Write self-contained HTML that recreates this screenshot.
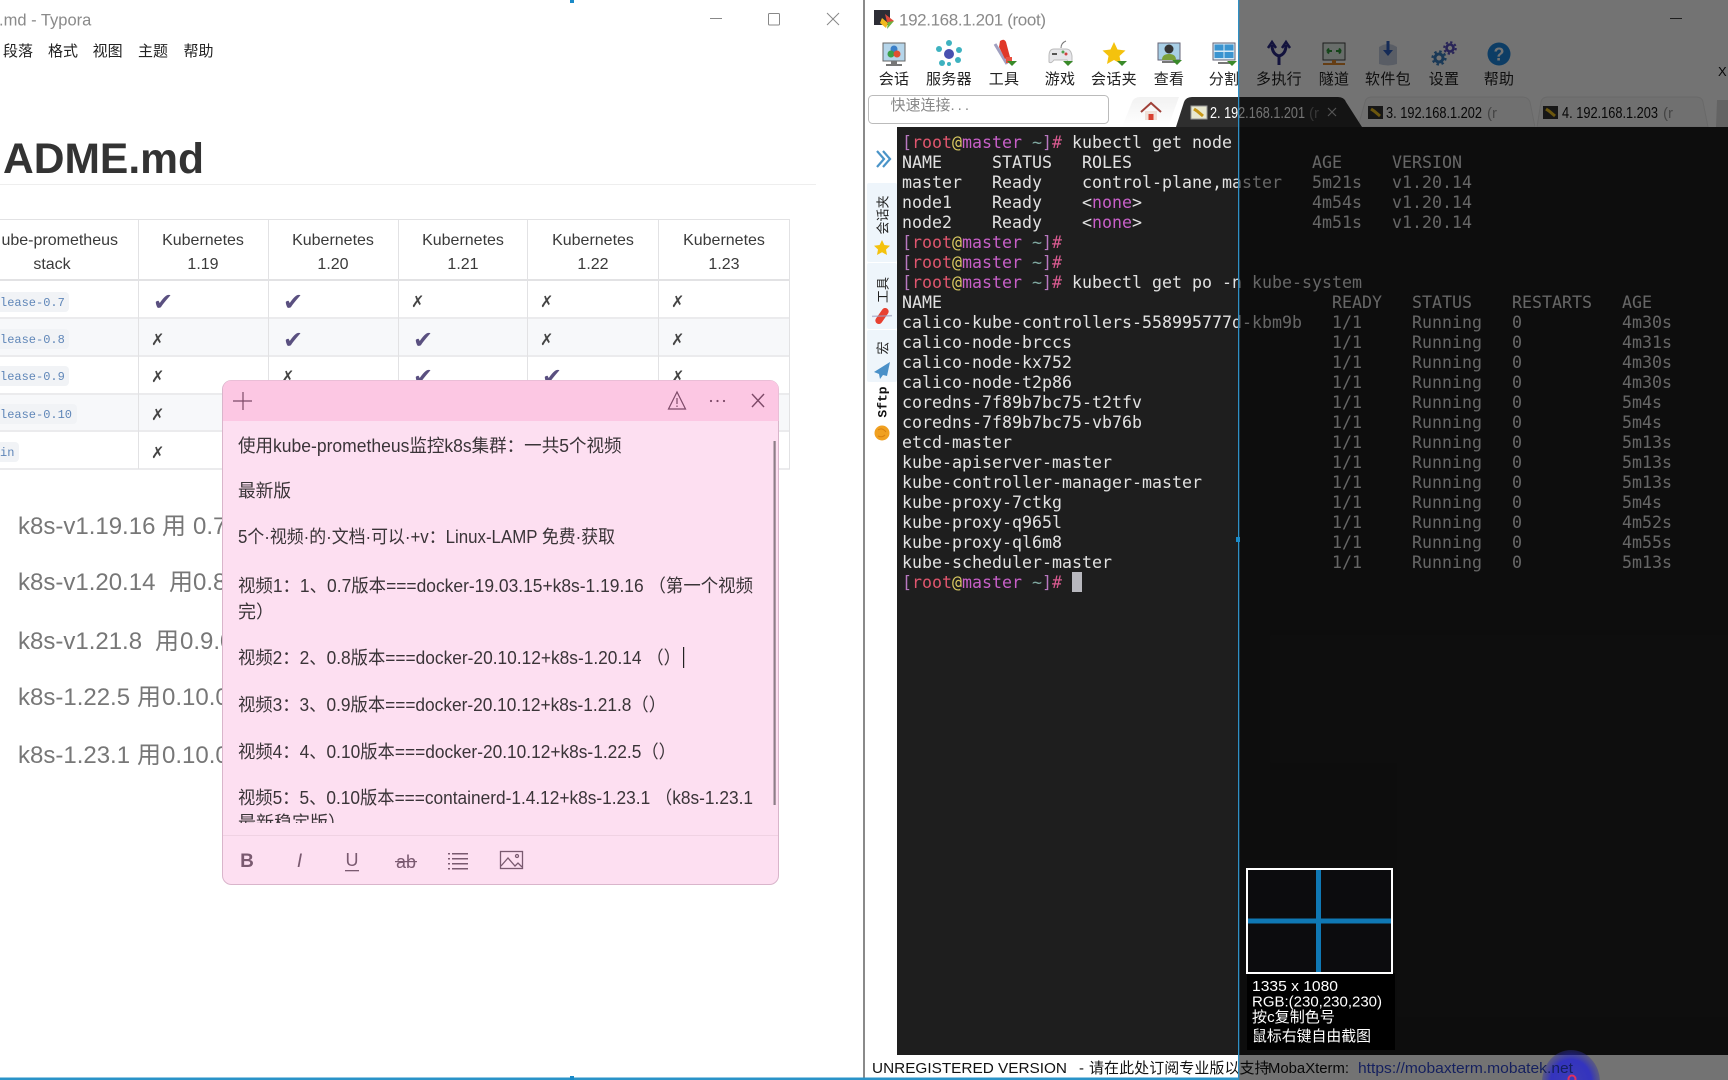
<!DOCTYPE html>
<html><head><meta charset="utf-8"><title>Typora MobaXterm</title>
<style>
html,body{margin:0;padding:0;background:#fff;width:1728px;height:1080px;overflow:hidden}
svg{display:block}
text{font-family:"Liberation Sans","Noto Sans CJK SC",sans-serif;white-space:pre}
.m{font-family:"DejaVu Sans Mono","Liberation Mono","Noto Sans CJK SC",monospace;font-size:16.61px;fill:#e2e2e2}
.c{font-family:"Liberation Mono",monospace;font-size:12px;fill:#5f86b8}
.h{font-size:16px;fill:#3a3a3a;text-anchor:middle}
.x{font-family:"DejaVu Sans",sans-serif;font-size:16px;fill:#444}
.k{font-family:"DejaVu Sans",sans-serif;font-size:24px;fill:#5a5080}
.p{font-size:24px;fill:#777}
.n{font-size:18px;fill:#3a3438}
.tb{font-size:15px;fill:#222;text-anchor:middle;letter-spacing:.3px}
.pk{fill:#c860c8}.r{fill:#e0566e}.y{fill:#d8c860}.g{fill:#7fa8a0}.br{fill:#b878c0}.hs{fill:#d85a90}
</style></head><body>
<svg width="1728" height="1080" viewBox="0 0 1728 1080" xmlns="http://www.w3.org/2000/svg">
<defs>
<clipPath id="noteclip"><rect x="223" y="421" width="548" height="402"/></clipPath>
<linearGradient id="hometab" x1="0" y1="0" x2="0" y2="1"><stop offset="0" stop-color="#f2f2f2"/><stop offset="1" stop-color="#fff"/></linearGradient>
<radialGradient id="blob" cx=".5" cy=".5" r=".5"><stop offset="0" stop-color="#2a2acc"/><stop offset=".7" stop-color="#1e1ed8"/><stop offset="1" stop-color="#3030a0" stop-opacity=".5"/></radialGradient>
</defs>
<rect width="1728" height="1080" fill="#fff"/>

<!-- TYPORA -->
<text x="-1" y="25.500" font-size="16.5" fill="#8a8a8a">.md - Typora</text>
<g font-size="15" fill="#222"><text x="3" y="56">段落</text><text x="48" y="56">格式</text><text x="92.6" y="56">视图</text><text x="138" y="56">主题</text><text x="183.5" y="56">帮助</text></g>
<g stroke="#888" stroke-width="1" fill="none"><path d="M710 18.5h12"/><rect x="768.5" y="13.5" width="11" height="11.5" rx="1"/><path d="M827 13l12 12M839 13l-12 12"/></g>
<text x="3" y="173" font-size="42.6" font-weight="700" fill="#333" textLength="201" lengthAdjust="spacingAndGlyphs">ADME.md</text>
<rect x="0" y="184" width="816" height="1" fill="#eee"/>

<!-- table -->
<rect x="0" y="318" width="790" height="38" fill="#f7f8fa"/><rect x="0" y="394" width="790" height="37" fill="#f7f8fa"/>
<g fill="#e2e2e4"><rect x="0" y="219" width="790" height="1"/><rect x="0" y="279" width="790" height="2"/><rect x="0" y="317" width="790" height="2" fill="#ebebed"/><rect x="0" y="355" width="790" height="2" fill="#ebebed"/><rect x="0" y="393" width="790" height="2" fill="#ebebed"/><rect x="0" y="430" width="790" height="2" fill="#ebebed"/><rect x="0" y="468" width="790" height="2" fill="#ebebed"/>
<rect x="138" y="219" width="1" height="250"/><rect x="268" y="219" width="1" height="250"/><rect x="398" y="219" width="1" height="250"/><rect x="527" y="219" width="1" height="250"/><rect x="658" y="219" width="1" height="250"/><rect x="789" y="219" width="1" height="250"/></g>
<text x="118" y="245" font-size="16" fill="#3a3a3a" text-anchor="end">ube-prometheus</text>
<text x="52" y="269" class="h">stack</text>
<text x="203" y="245" class="h">Kubernetes</text><text x="203" y="269" class="h">1.19</text>
<text x="333" y="245" class="h">Kubernetes</text><text x="333" y="269" class="h">1.20</text>
<text x="463" y="245" class="h">Kubernetes</text><text x="463" y="269" class="h">1.21</text>
<text x="593" y="245" class="h">Kubernetes</text><text x="593" y="269" class="h">1.22</text>
<text x="724" y="245" class="h">Kubernetes</text><text x="724" y="269" class="h">1.23</text>
<g fill="#f1f3f6"><rect x="-6" y="292" width="75" height="20" rx="4"/><rect x="-6" y="329" width="75" height="20" rx="4"/><rect x="-6" y="366" width="75" height="20" rx="4"/><rect x="-6" y="404" width="83" height="20" rx="4"/><rect x="-6" y="442" width="25" height="20" rx="4"/></g>
<text x="0" y="306" class="c">lease-0.7</text><text x="0" y="343" class="c">lease-0.8</text><text x="0" y="380" class="c">lease-0.9</text><text x="0" y="418" class="c">lease-0.10</text><text x="0" y="456" class="c">in</text>
<text x="153" y="310" class="k">&#x2714;</text><text x="283" y="310" class="k">&#x2714;</text><text x="411" y="307" class="x">&#x2717;</text><text x="540" y="307" class="x">&#x2717;</text><text x="671" y="307" class="x">&#x2717;</text>
<text x="151" y="345" class="x">&#x2717;</text><text x="283" y="348" class="k">&#x2714;</text><text x="413" y="348" class="k">&#x2714;</text><text x="540" y="345" class="x">&#x2717;</text><text x="671" y="345" class="x">&#x2717;</text>
<text x="151" y="382" class="x">&#x2717;</text><text x="281" y="382" class="x">&#x2717;</text><text x="413" y="385" class="k">&#x2714;</text><text x="542" y="385" class="k">&#x2714;</text><text x="671" y="382" class="x">&#x2717;</text>
<text x="151" y="420" class="x">&#x2717;</text>
<text x="151" y="458" class="x">&#x2717;</text>

<!-- paragraphs -->
<text y="534" class="p"><tspan x="18">k8s-v1.19.16</tspan><tspan x="162">用</tspan><tspan x="193">0.7.0</tspan></text>
<text y="590" class="p"><tspan x="18">k8s-v1.20.14</tspan><tspan x="169">用</tspan><tspan x="193">0.8.0</tspan></text>
<text y="649" class="p"><tspan x="18">k8s-v1.21.8</tspan><tspan x="155">用</tspan><tspan x="180">0.9.0</tspan></text>
<text y="705" class="p"><tspan x="18">k8s-1.22.5</tspan><tspan x="137">用</tspan><tspan x="162">0.10.0</tspan></text>
<text y="763" class="p"><tspan x="18">k8s-1.23.1</tspan><tspan x="137">用</tspan><tspan x="162">0.10.0</tspan></text>

<!-- NOTE -->
<rect x="222.5" y="380.5" width="556" height="504" rx="9" fill="#fddff1" stroke="#d9b5cb"/>
<path d="M223 421V389a8.500 8.500 0 0 1 8.500-8.500H770a8.500 8.500 0 0 1 8.500 8.500V421z" fill="#fcc7e3"/>
<g stroke="#7d4a68" stroke-width="1.2" fill="none">
<path d="M243 392v18M233 401h19"/>
<path d="M677 392l-8.500 17h17z"/><path d="M677 398v6M677 405.500v1.500"/>
<path d="M752 394l12 13M764 394l-12 13" stroke-width="1.400"/>
</g>
<g fill="#7d4a68"><circle cx="711" cy="401" r="1.100"/><circle cx="717.500" cy="401" r="1.100"/><circle cx="724" cy="401" r="1.100"/></g>
<g clip-path="url(#noteclip)">
<text x="238" y="452" class="n" textLength="383.500" lengthAdjust="spacingAndGlyphs">使用kube-prometheus监控k8s集群&#xFF1A;一共5个视频</text>
<text x="238" y="497" class="n" textLength="53" lengthAdjust="spacingAndGlyphs">最新版</text>
<text x="238" y="543" class="n" textLength="377" lengthAdjust="spacingAndGlyphs">5个·视频·的·文档·可以·+v&#xFF1A;Linux-LAMP 免费·获取</text>
<text x="238" y="592" class="n" textLength="515" lengthAdjust="spacingAndGlyphs">视频1&#xFF1A;1&#x3001;0.7版本===docker-19.03.15+k8s-1.19.16 &#xFF08;第一个视频</text>
<text x="238" y="618" class="n">完&#xFF09;</text>
<text x="238" y="664" class="n" textLength="443" lengthAdjust="spacingAndGlyphs">视频2&#xFF1A;2&#x3001;0.8版本===docker-20.10.12+k8s-1.20.14 &#xFF08;&#xFF09;</text>
<text x="238" y="711" class="n" textLength="428" lengthAdjust="spacingAndGlyphs">视频3&#xFF1A;3&#x3001;0.9版本===docker-20.10.12+k8s-1.21.8&#xFF08;&#xFF09;</text>
<text x="238" y="758" class="n" textLength="438" lengthAdjust="spacingAndGlyphs">视频4&#xFF1A;4&#x3001;0.10版本===docker-20.10.12+k8s-1.22.5&#xFF08;&#xFF09;</text>
<text x="238" y="804" class="n" textLength="515" lengthAdjust="spacingAndGlyphs">视频5&#xFF1A;5&#x3001;0.10版本===containerd-1.4.12+k8s-1.23.1 &#xFF08;k8s-1.23.1</text>
<text x="238" y="829" class="n">最新稳定版&#xFF09;</text>
</g>
<rect x="683" y="647" width="1.200" height="21" fill="#222"/>
<rect x="773.500" y="441" width="2.200" height="364" fill="#8d7d87"/>
<rect x="223" y="835" width="555" height="1" fill="#f0d2e3"/>
<text x="247" y="867" text-anchor="middle" font-size="19" font-weight="700" fill="#7a5a70">B</text>
<text x="299.500" y="867" text-anchor="middle" font-size="19" font-style="italic" fill="#7a5a70">I</text>
<text x="352" y="866" text-anchor="middle" font-size="18" fill="#7a5a70">U</text><rect x="345" y="870" width="14" height="1.300" fill="#7a5a70"/>
<text x="406" y="868" text-anchor="middle" font-size="18" fill="#7a5a70">ab</text><rect x="395" y="861" width="22" height="1.200" fill="#7a5a70"/>
<g fill="#7a5a70"><rect x="448" y="853" width="2" height="1.500"/><rect x="452" y="853" width="16" height="1.500"/><rect x="448" y="858" width="2" height="1.500"/><rect x="452" y="858" width="16" height="1.500"/><rect x="448" y="863" width="2" height="1.500"/><rect x="452" y="863" width="16" height="1.500"/><rect x="448" y="868" width="2" height="1.500"/><rect x="452" y="868" width="16" height="1.500"/></g>
<g fill="none" stroke="#7a5a70" stroke-width="1.300"><rect x="500.500" y="851.500" width="22" height="17"/><path d="M501 866l7-8 7 8 3-3 4 4"/><circle cx="517" cy="856" r="1.500"/></g>

<!-- MOBAXTERM -->
<rect x="863" y="0" width="2" height="1080" fill="#8a8a8a"/>
<g>
<rect x="874" y="10" width="16" height="15" fill="#2d2d35"/>
<path d="M885 14l9 7-3 2-4-1z" fill="#e04a3a"/><path d="M882 18l6 5-2 5-6-5z" fill="#f2b91d"/><path d="M888 22l6-1-7 8z" fill="#6db33f"/>
</g>
<text x="899" y="25.500" font-size="17" fill="#8a8a8a" textLength="147">192.168.1.201 (root)</text>
<path d="M1670 18.500h12" stroke="#444" stroke-width="1"/>

<!-- toolbar icons -->
<g transform="translate(894,54)"><rect x="-11" y="-11" width="22" height="18" fill="#b5d5ea" stroke="#666"/><rect x="-3" y="7" width="6" height="3" fill="#777"/><rect x="-8" y="10" width="16" height="2" fill="#777"/><circle cx="0" cy="-5" r="3.500" fill="#3a7fc8"/><circle cx="-3" cy="0" r="3.500" fill="#3aa048"/><circle cx="3" cy="0" r="3.500" fill="#e05030"/></g>
<g transform="translate(949,54)"><g fill="#3eb2c0"><circle cx="-10" cy="-5" r="3"/><circle cx="0" cy="-11" r="3"/><circle cx="10" cy="-4" r="3"/><circle cx="9" cy="6" r="3"/><circle cx="-7" cy="9" r="3"/><circle cx="0" cy="10" r="2"/></g><circle cx="0" cy="0" r="5" fill="#4850b0"/></g>
<g transform="translate(1004,54)"><path d="M-9-10l12 20" stroke="#a0a0c0" stroke-width="3"/><path d="M-4-13q4-3 6 1l4 15-5 2-6-12z" fill="#e03828"/><rect x="2" y="3" width="6" height="6" fill="#e85040"/><path d="M3 7l10 0-5 5z" fill="#3a8a2a"/></g>
<g transform="translate(1060,54)"><path d="M-11 2q0-7 5-7h12q5 0 6 7l0 6q-3 2-5-2h-13q-3 4-5 2z" fill="#e6e6ea" stroke="#bbb"/><circle cx="6" cy="0" r="1.500" fill="#d04040"/><circle cx="3" cy="-2" r="1.500" fill="#50a050"/><rect x="-8" y="-1" width="5" height="2" fill="#555"/><path d="M1-6q0-5 5-7" stroke="#777" fill="none"/><path d="M3 7h10l-5 5z" fill="#3a8a2a"/></g>
<g transform="translate(1114,54)"><path d="M0-12l3.500 7.500 8 1-6 5.500 1.500 8-7-4-7 4 1.500-8-6-5.500 8-1z" fill="#f4c20d"/><path d="M3 7h10l-5 5z" fill="#3a8a2a"/></g>
<g transform="translate(1169,54)"><rect x="-11" y="-11" width="22" height="17" fill="#a8cfe6" stroke="#667"/><circle cx="0" cy="-5" r="4.500" fill="#333"/><path d="M-7 6q0-6 7-6t7 6z" fill="#7aa03a"/><rect x="-7" y="7" width="14" height="2" fill="#777"/><path d="M3 6h10l-5 5z" fill="#3a8a2a"/></g>
<g transform="translate(1224,54)"><rect x="-11" y="-11" width="22" height="17" fill="#d5e8f5" stroke="#667"/><rect x="-9.500" y="-9.500" width="9" height="6" fill="#3a94d0"/><rect x=".5" y="-9.500" width="9" height="6" fill="#3a94d0"/><rect x="-9.500" y="-2" width="9" height="6" fill="#3a94d0"/><rect x=".5" y="-2" width="9" height="6" fill="#3a94d0"/><rect x="-6" y="8" width="12" height="2" fill="#777"/><path d="M3 7h10l-5 5z" fill="#3a8a2a"/></g>
<g transform="translate(1279,54)" fill="none" stroke="#2a2a88" stroke-width="3"><path d="M0 11V2M0 2Q-7 0-7-9M0 2Q7 0 7-9"/><path d="M-11-6l4-6 4 6M3-6l4-6 4 6" stroke-width="2.500"/></g>
<g transform="translate(1334,54)"><rect x="-11" y="-11" width="22" height="17" fill="#e6f2ea" stroke="#444"/><path d="M-7-3h5M-7-3l2-2.500M-7-3l2 2.500M7-3h-5M7-3l-2-2.500M7-3l-2 2.500" stroke="#2f9a3a" stroke-width="2" fill="none"/><rect x="-2" y="6" width="4" height="3" fill="#e08a30"/><rect x="-11" y="9" width="22" height="2" fill="#e08a30"/></g>
<g transform="translate(1388,54)"><path d="M-9-7q9-6 18 0v17q-9 3-18 0z" fill="#c5cfe0"/><rect x="-1.500" y="-13" width="3" height="11" fill="#3060c0"/><path d="M-5-4h10l-5 6z" fill="#3060c0"/></g>
<g transform="translate(1444,54)" fill="none"><circle cx="-5" cy="4" r="4" stroke="#3a7fc0" stroke-width="3"/><circle cx="-5" cy="4" r="6.500" stroke="#3a7fc0" stroke-width="2.200" stroke-dasharray="2.500 2.600"/><circle cx="6" cy="-6" r="3.500" stroke="#5a50c0" stroke-width="2.600"/><circle cx="6" cy="-6" r="5.800" stroke="#5a50c0" stroke-width="2" stroke-dasharray="2.300 2.250"/></g>
<g transform="translate(1499,54)"><circle r="11.500" fill="#1e88e0"/><text y="6.500" text-anchor="middle" font-size="18" font-weight="700" fill="#fff">?</text></g>
<text x="894" y="84" class="tb">会话</text><text x="949" y="84" class="tb">服务器</text><text x="1004" y="84" class="tb">工具</text><text x="1060" y="84" class="tb">游戏</text><text x="1114" y="84" class="tb">会话夹</text><text x="1169" y="84" class="tb">查看</text><text x="1224" y="84" class="tb">分割</text><text x="1279" y="84" class="tb">多执行</text><text x="1334" y="84" class="tb">隧道</text><text x="1388" y="84" class="tb">软件包</text><text x="1444" y="84" class="tb">设置</text><text x="1499" y="84" class="tb">帮助</text>
<text x="1718" y="76" font-size="13" fill="#111">X</text>

<!-- quick connect -->
<rect x="868.500" y="95.500" width="240" height="28" rx="4" fill="#fff" stroke="#bbb"/>
<text x="890.500" y="110" font-size="15" fill="#888">快速连接<tspan letter-spacing="3">...</tspan></text>

<!-- tabs -->
<path d="M1122 127L1132 102Q1134 97 1140 97H1179L1168 127z" fill="url(#hometab)"/>
<g transform="translate(1151,112)"><path d="M-10 0L0-9 10 0" fill="none" stroke="#a04038" stroke-width="2"/><rect x="-6" y="-1" width="12" height="9" fill="#f0e0d8"/><rect x="-2.500" y="2" width="5" height="6" fill="#d84030"/></g>
<path d="M1358 127L1365 102Q1366 97 1372 97H1522Q1528 97 1530 102L1535 127z" fill="#f8f8f8" stroke="#e8e8e8"/>
<path d="M1537 127L1541 102Q1542 97 1548 97H1696Q1702 97 1703 102L1708 127z" fill="#f8f8f8" stroke="#e8e8e8"/>
<path d="M1716 127L1717 100H1728V127z" fill="#dcdcdc"/>
<path d="M1176 127L1184 102Q1186 97 1192 97H1338Q1344 97 1346 102L1362 127z" fill="#2e2e2e"/>
<g><rect x="1191" y="106" width="16" height="13" fill="#e8e8d0" stroke="#999"/><path d="M1194 109l3 2 6 5" stroke="#c89818" stroke-width="3" fill="none"/></g>
<text x="1210" y="118" font-size="16" fill="#fff" textLength="95" lengthAdjust="spacingAndGlyphs">2. 192.168.1.201</text>
<text x="1309" y="118" font-size="15" fill="#777">(r</text>
<path d="M1328 108l8 8M1336 108l-8 8" stroke="#bbb" stroke-width="1.200"/>
<rect x="1368" y="106" width="15" height="13" fill="#333"/><path d="M1371 109l3 2 6 5" stroke="#f0c020" stroke-width="3" fill="none"/>
<text x="1386" y="118" font-size="16" fill="#111" textLength="96" lengthAdjust="spacingAndGlyphs">3. 192.168.1.202</text><text x="1487" y="118" font-size="15" fill="#999">(r</text>
<rect x="1543" y="106" width="15" height="13" fill="#333"/><path d="M1546 109l3 2 6 5" stroke="#f0c020" stroke-width="3" fill="none"/>
<text x="1562" y="118" font-size="16" fill="#111" textLength="96" lengthAdjust="spacingAndGlyphs">4. 192.168.1.203</text><text x="1663" y="118" font-size="15" fill="#999">(r</text>

<!-- sidebar -->
<g fill="none" stroke="#4a94c8" stroke-width="2.200"><path d="M877 151l7 8-7 8M883 151l7 8-7 8"/></g>
<g fill="#eef5fb"><rect x="867" y="183" width="30" height="79" rx="2"/><rect x="867" y="263" width="30" height="66" rx="2"/><rect x="867" y="330" width="30" height="52" rx="2"/></g>
<text transform="translate(887.500,215) rotate(-90)" font-size="13" fill="#222" text-anchor="middle">会话夹</text>
<path transform="translate(882,248)" d="M0-8l2.400 5 5.600.7-4 3.800 1 5.500-5-2.700-5 2.700 1-5.500-4-3.800 5.600-.7z" fill="#f4c20d"/>
<text transform="translate(887.500,290) rotate(-90)" font-size="13" fill="#222" text-anchor="middle">工具</text>
<g transform="translate(882,316) rotate(35)"><rect x="-3.500" y="-9" width="7" height="18" rx="3.500" fill="#e84030"/><path d="M-8 6l16-12" stroke="#a0a0c0" stroke-width="1.500" opacity=".7"/></g>
<text transform="translate(887.500,348) rotate(-90)" font-size="13" fill="#222" text-anchor="middle">宏</text>
<path d="M890 362l-16 10 5 2 1 5 3-4 4 1z" fill="#4a90c8"/>
<text transform="translate(886.500,402) rotate(-90)" font-size="13" font-weight="700" style="font-family:'Liberation Mono',monospace" fill="#111" text-anchor="middle">Sftp</text>
<circle cx="882" cy="433" r="7.500" fill="#f0a020"/><path d="M878 430q4-3 8 2M878 436q4 2 7-1" stroke="#d88010" fill="none"/>

<!-- terminal -->
<rect x="897" y="127" width="831" height="928" fill="#1e1e1e"/>
<g>
<text x="902" y="148" class="m"><tspan class="br">[</tspan><tspan class="r">root</tspan><tspan class="y">@</tspan><tspan class="pk">master</tspan> <tspan class="g">~</tspan><tspan class="br">]</tspan><tspan class="hs">#</tspan> kubectl get node</text>
<text x="902" y="168" class="m">NAME     STATUS   ROLES                  AGE     VERSION</text>
<text x="902" y="188" class="m">master   Ready    control-plane,master   5m21s   v1.20.14</text>
<text x="902" y="208" class="m">node1    Ready    &lt;<tspan class="pk">none</tspan>&gt;                 4m54s   v1.20.14</text>
<text x="902" y="228" class="m">node2    Ready    &lt;<tspan class="pk">none</tspan>&gt;                 4m51s   v1.20.14</text>
<text x="902" y="248" class="m"><tspan class="br">[</tspan><tspan class="r">root</tspan><tspan class="y">@</tspan><tspan class="pk">master</tspan> <tspan class="g">~</tspan><tspan class="br">]</tspan><tspan class="hs">#</tspan></text>
<text x="902" y="268" class="m"><tspan class="br">[</tspan><tspan class="r">root</tspan><tspan class="y">@</tspan><tspan class="pk">master</tspan> <tspan class="g">~</tspan><tspan class="br">]</tspan><tspan class="hs">#</tspan></text>
<text x="902" y="288" class="m"><tspan class="br">[</tspan><tspan class="r">root</tspan><tspan class="y">@</tspan><tspan class="pk">master</tspan> <tspan class="g">~</tspan><tspan class="br">]</tspan><tspan class="hs">#</tspan> kubectl get po -n kube-system</text>
<text x="902" y="308" class="m">NAME                                       READY   STATUS    RESTARTS   AGE</text>
<text x="902" y="328" class="m">calico-kube-controllers-558995777d-kbm9b   1/1     Running   0          4m30s</text>
<text x="902" y="348" class="m">calico-node-brccs                          1/1     Running   0          4m31s</text>
<text x="902" y="368" class="m">calico-node-kx752                          1/1     Running   0          4m30s</text>
<text x="902" y="388" class="m">calico-node-t2p86                          1/1     Running   0          4m30s</text>
<text x="902" y="408" class="m">coredns-7f89b7bc75-t2tfv                   1/1     Running   0          5m4s</text>
<text x="902" y="428" class="m">coredns-7f89b7bc75-vb76b                   1/1     Running   0          5m4s</text>
<text x="902" y="448" class="m">etcd-master                                1/1     Running   0          5m13s</text>
<text x="902" y="468" class="m">kube-apiserver-master                      1/1     Running   0          5m13s</text>
<text x="902" y="488" class="m">kube-controller-manager-master             1/1     Running   0          5m13s</text>
<text x="902" y="508" class="m">kube-proxy-7ctkg                           1/1     Running   0          5m4s</text>
<text x="902" y="528" class="m">kube-proxy-q965l                           1/1     Running   0          4m52s</text>
<text x="902" y="548" class="m">kube-proxy-ql6m8                           1/1     Running   0          4m55s</text>
<text x="902" y="568" class="m">kube-scheduler-master                      1/1     Running   0          5m13s</text>
<text x="902" y="588" class="m"><tspan class="br">[</tspan><tspan class="r">root</tspan><tspan class="y">@</tspan><tspan class="pk">master</tspan> <tspan class="g">~</tspan><tspan class="br">]</tspan><tspan class="hs">#</tspan></text>
<rect x="1072" y="572" width="10" height="20" fill="#b8b8be"/>
</g>

<!-- status bar -->
<rect x="865" y="1055" width="863" height="25" fill="#fff"/>
<text y="1073" font-size="15" fill="#111"><tspan x="872" textLength="195" lengthAdjust="spacingAndGlyphs">UNREGISTERED VERSION</tspan><tspan x="1079">-</tspan><tspan x="1089" letter-spacing=".05">请在此处订阅专业版以支持</tspan><tspan x="1268" textLength="81" lengthAdjust="spacingAndGlyphs">MobaXterm:</tspan></text>

<!-- DIM OVERLAY -->
<rect x="1239" y="0" width="489" height="1080" fill="#000" fill-opacity=".55"/>

<!-- selection frame -->
<rect x="0" y="1077.500" width="1239" height="2.500" fill="#2a93c8"/>
<rect x="1238" y="0" width="1.300" height="1080" fill="#2f8fc4"/>
<rect x="570" y="0" width="4" height="3" fill="#1a8ac8"/>
<rect x="570" y="1076" width="4" height="4" fill="#1a8ac8"/>
<rect x="1236" y="537" width="4" height="5" fill="#1a8ac8"/>

<!-- blue blob -->
<ellipse cx="1571" cy="1082" rx="29" ry="32" fill="url(#blob)" opacity=".75"/>
<text x="1358" y="1073" font-size="15" fill="#15205e" textLength="215" lengthAdjust="spacingAndGlyphs">https://mobaxterm.mobatek.net</text>
<circle cx="1572" cy="1079" r="3.500" fill="none" stroke="#e03060" stroke-width="2"/>

<!-- color picker preview -->
<rect x="1247" y="973" width="148" height="77" fill="#000"/>
<rect x="1247" y="869" width="145" height="104" fill="#0c0c0e" stroke="#fff" stroke-width="2"/>
<rect x="1316" y="870" width="5" height="102" fill="#0f78b4"/>
<rect x="1248" y="918.500" width="143" height="5" fill="#0f78b4"/>
<g font-size="15" fill="#fff">
<text x="1252" y="991" textLength="86" lengthAdjust="spacingAndGlyphs">1335 x 1080</text>
<text x="1252" y="1006.500" textLength="130" lengthAdjust="spacingAndGlyphs">RGB:(230,230,230)</text>
<text x="1252" y="1022" textLength="83" lengthAdjust="spacingAndGlyphs">按c复制色号</text>
<text x="1252" y="1041" textLength="119" lengthAdjust="spacingAndGlyphs">鼠标右键自由截图</text>
</g>
</svg>
</body></html>
